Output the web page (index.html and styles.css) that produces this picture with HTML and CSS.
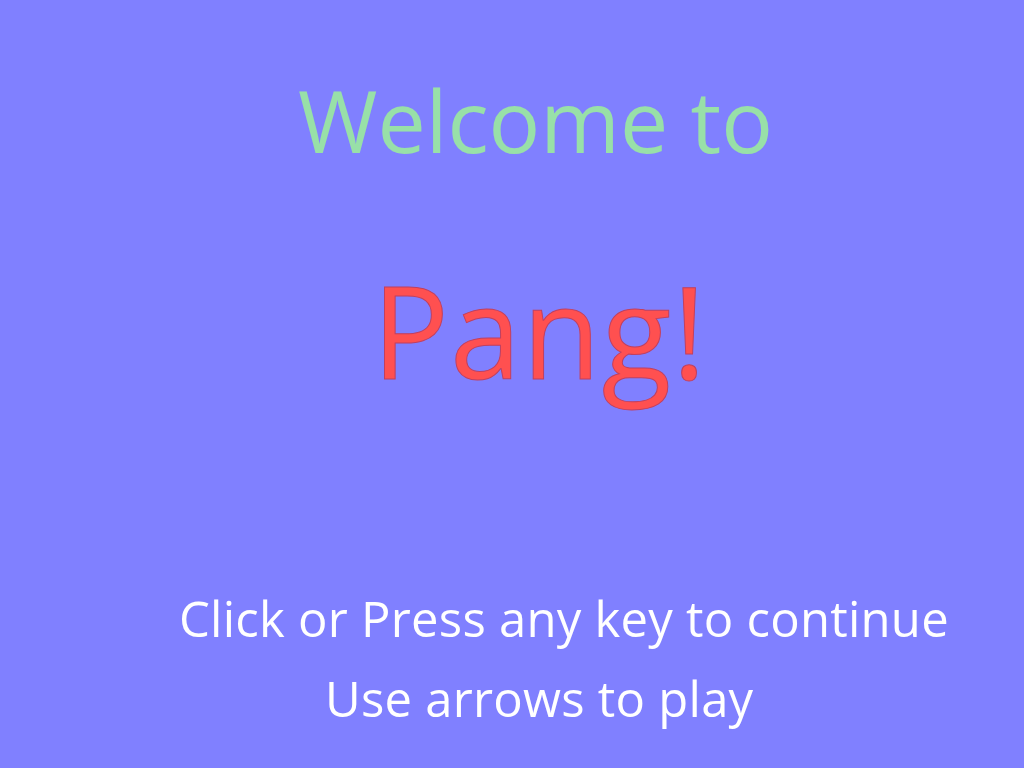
FILE: index.html
```html
<!DOCTYPE html>
<html>
<head>
<meta charset="utf-8">
<link rel="stylesheet" href="styles.css">
</head>
<body>
<main class="screen">
  <div class="welcome">Welcome to</div>
  <div class="title">Pang!</div>
  <div class="hint hint-continue">Click or Press any key to continue</div>
  <div class="hint hint-play">Use arrows to play</div>
</main>
</body>
</html>
```
FILE: styles.css
```css
html, body {
  margin: 0;
  padding: 0;
  background: #8080ff;
}
.screen {
  width: 1024px;
  height: 768px;
  overflow: hidden;
  font-family: "Open Sans", sans-serif;
  display: flex;
  flex-direction: column;
  align-items: flex-start;
}
.welcome {
  font-size: 86px;
  line-height: 86px;
  color: #98e0a8;
  margin-top: 77px;
  margin-left: 298px;
  white-space: nowrap;
}
.title {
  font-size: 128px;
  line-height: 128px;
  letter-spacing: 1px;
  color: #ff5050;
  -webkit-text-stroke: 1px #c04060;
  margin-top: 103px;
  margin-left: 372px;
  white-space: nowrap;
}
.hint {
  font-size: 49px;
  line-height: 49px;
  letter-spacing: 0.25px;
  color: #ffffff;
  white-space: nowrap;
}
.hint-continue {
  margin-top: 200px;
  margin-left: 179px;
}
.hint-play {
  margin-top: 31px;
  margin-left: 325px;
}
```
